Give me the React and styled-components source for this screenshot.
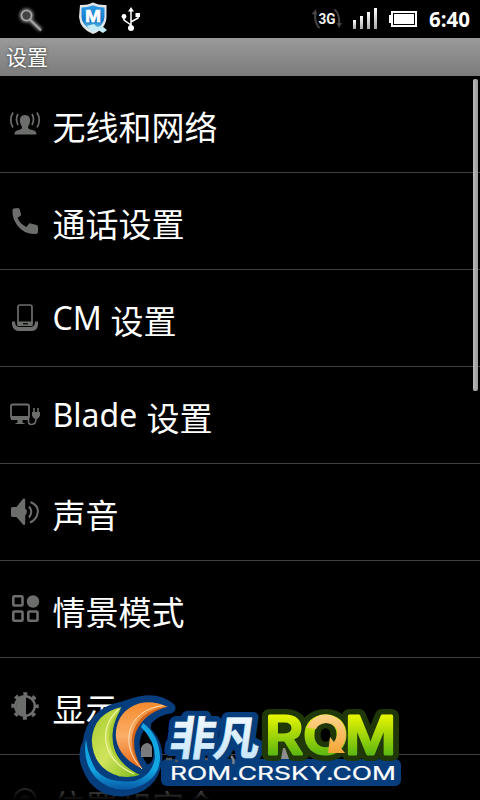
import React from 'react';
import styled, { createGlobalStyle } from 'styled-components';

const GREY = '#6c6e6c';

const NetworkIcon = () => (
  <Icon viewBox="0 0 32 32">
    <path fill={GREY} d="M16 7c4 0 5.500 3 5 6.500-.3 2.500-1.500 4-2 5.500 0 2 1.200 2 4.500 3 3.500 1 4 2.500 4 4.500h-22c0-2 .5-3.500 4-4.500 3.300-1 3.700-1.500 3.500-3-.7-1.500-1.700-3-2-5.500C10.500 10 12 7 16 7z" />
    <g fill="none" stroke={GREY} strokeWidth="1.700">
      <path d="M4 4.500q-4.500 7.500 0 15M9 6q-3 5 0 11M28 4.500q4.500 7.500 0 15M23 6q3 5 0 11" />
    </g>
  </Icon>
);

const PhoneIcon = () => (
  <Icon viewBox="0 -1 32 32">
    <path fill={GREY} d="M5 2.500l4-.5q1.500 0 1.800 1.500l1.200 5q0 1-1 1.700l-2.500 1.500q2.500 6.300 9 9.300l2-2.800q1-1.200 2.300-.8l5.700 1.600q1.500.5 1.500 2v5q0 2-3.500 2Q14.500 28 8 19 3 12 3.500 4.500q0-2 1.500-2z" />
  </Icon>
);

const DockIcon = () => (
  <Icon viewBox="0 -1 32 32">
    <rect x="9" y="2" width="14" height="20" rx="2" fill="none" stroke={GREY} strokeWidth="1.700" />
    <path fill={GREY} d="M8.500 18.500h15V23h-15zM3 18.500h3q0 5 4 5.500h12q4-.5 4-5.500h3v3q-.5 6.500-6 6.500H9.500Q4 28 3 21.500z" />
    <path d="M14 20.800h5" stroke="#000" strokeWidth="1.300" />
  </Icon>
);

const ComputerIcon = () => (
  <Icon viewBox="0 0 32 32">
    <rect x="2" y="5.500" width="18" height="14" rx="1.500" fill="none" stroke={GREY} strokeWidth="1.800" />
    <path fill={GREY} d="M2 17h18v4H2zM8.500 21h5v2.500l3 1.500H5.500l3-1.500zM23 13h8v3.500q-1.500 3.500-4 3.500t-4-3.500z" />
    <path d="M25 9v5M29 9v5M18 19q2 .5 1.500 3-.3 3.500 3 3.500 4.500 0 4.500-6" fill="none" stroke={GREY} strokeWidth="1.600" />
  </Icon>
);

const SoundIcon = () => (
  <Icon viewBox="0 -.5 32 32">
    <path fill={GREY} d="M2 11.500l1-1h4.500L14 2.300q2-1 2.200.7v9q3.500 2.500 0 7v8.500q-.4 1.800-2.200.5L7.500 20.500H3l-1-1z" />
    <path d="M20 10q4.500 5.500 0 11M21.500 5.500q9 4 7 11.500Q27.500 23 21 26" fill="none" stroke={GREY} strokeWidth="2" />
  </Icon>
);

const ProfileIcon = () => (
  <Icon viewBox="0 0 32 32">
    <g fill="none" stroke={GREY} strokeWidth="2.600">
      <rect x="4.300" y="3.300" width="9.200" height="9.200" rx="1" />
      <rect x="4.300" y="18.500" width="9.200" height="9.200" rx="1" />
      <rect x="19.300" y="18.500" width="9.200" height="9.200" rx="1" />
    </g>
    <circle cx="24" cy="8.500" r="6.200" fill={GREY} />
  </Icon>
);

const DisplayIcon = () => (
  <Icon viewBox="0 0 32 32">
    <circle cx="16" cy="16" r="9.800" fill="none" stroke={GREY} strokeWidth="2.400" />
    <circle cx="16" cy="16" r="12" fill="none" stroke={GREY} strokeWidth="3.500" strokeDasharray="4 5.425" strokeDashoffset="2" />
    <path fill={GREY} d="M17 6v20a10 10 0 0 1 0-20z" />
  </Icon>
);

const LocationIcon = () => (
  <Icon viewBox="0 0 32 32">
    <circle cx="16" cy="13" r="11" fill="none" stroke={GREY} strokeWidth="2" />
    <circle cx="16" cy="14" r="6" fill={GREY} />
  </Icon>
);

const items = [
  { name: '无线和网络', icon: NetworkIcon },
  { name: '通话设置', icon: PhoneIcon },
  { name: '设置', prefix: 'CM', prefixWidth: 48, icon: DockIcon },
  { name: '设置', prefix: 'Blade', prefixWidth: 84, icon: ComputerIcon },
  { name: '声音', icon: SoundIcon },
  { name: '情景模式', icon: ProfileIcon },
  { name: '显示', icon: DisplayIcon },
  { name: '位置和安全', icon: LocationIcon },
];

const StatusIcons = () => (
  <svg width="150" height="38" viewBox="0 0 150 38">
    <defs>
      <filter id="glow" x="-50%" y="-50%" width="200%" height="200%"><feGaussianBlur stdDeviation="1.800" /></filter>
      <linearGradient id="shield" x1="0" y1="0" x2="0" y2="1">
        <stop offset="0" stopColor="#2d9be6" />
        <stop offset=".6" stopColor="#1378c8" />
        <stop offset="1" stopColor="#8de0f4" />
      </linearGradient>
    </defs>
    <g fill="none" stroke="#888" strokeWidth="4" filter="url(#glow)">
      <circle cx="26.500" cy="15.500" r="5" /><path d="M30 20l11 10" />
    </g>
    <circle cx="26.500" cy="15.500" r="5" fill="#444" stroke="#aaa" strokeWidth="1.600" />
    <path d="M30 19.500l11 11" stroke="#a5a5a5" strokeWidth="1.800" />
    <path d="M80 5q7 .5 13-2.500Q99 5.500 106.500 5v12q-.5 12-13.500 17Q80 29 79 17z" fill="#e4e5e8" />
    <path d="M81.500 7.500q6 0 11.500-2.200 5 2.200 11.500 2.200V17q-.5 9-11.500 14-11-5-11.500-14z" fill="url(#shield)" />
    <text x="85" y="21.500" fontFamily="Liberation Sans, sans-serif" fontSize="17" fontWeight="700" fill="#fff" stroke="#fff" strokeWidth=".6" textLength="16" lengthAdjust="spacingAndGlyphs">M</text>
    <path d="M87 26l7-2 3 3 5-1 5 4-4 3-5-3-6 2z" fill="#c4ecf6" />
    <g fill="none" stroke="#fff" strokeWidth="1.500">
      <path d="M131 28V10M131 25l-7-5v-4M131 22l7-4v-4" />
    </g>
    <path fill="#fff" d="M131 7l3 4.500h-6zM135.500 13h4.500v4h-4.500z" />
    <circle cx="124" cy="16.500" r="2.400" fill="#fff" />
    <circle cx="131" cy="28" r="3" fill="#fff" />
  </svg>
);

const SystemIcons = () => (
  <svg width="110" height="38" viewBox="310 0 110 38">
    <defs>
      <linearGradient id="signal" x1="0" y1="0" x2="0" y2="1">
        <stop offset="0" stopColor="#fff" /><stop offset="1" stopColor="#aaa" />
      </linearGradient>
    </defs>
    <g fill="none" stroke="#444" strokeWidth="2">
      <path d="M319.500 28q-5-4-4.500-16M334.500 9.500q5.500 4 4.500 16" />
    </g>
    <path fill="#444" d="M311.500 14l4.500-5 1 6zM336.500 23h5.500l-3 5z" />
    <text x="318.500" y="24" fontFamily="Roboto, sans-serif" fontSize="14" fontWeight="700" fill="#f2f2f2" textLength="17" lengthAdjust="spacingAndGlyphs">3G</text>
    <g fill="url(#signal)">
      <rect x="353" y="20" width="3" height="9" />
      <rect x="360" y="16" width="3" height="13" />
      <rect x="367" y="12" width="3" height="17" />
      <rect x="374" y="8" width="3" height="21" />
    </g>
    <path fill="#fff" d="M391 11h26v16h-26v-4h-2v-8h2z" />
    <rect x="393.500" y="13.500" width="21" height="11" fill="#fff" stroke="#000" />
  </svg>
);

const Watermark = () => (
  <WatermarkSvg width="330" height="110" viewBox="75 690 330 110">
    <defs>
      <linearGradient id="lime" x1="0" y1="0" x2="1" y2="1">
        <stop offset="0" stopColor="#a5ca2b" /><stop offset=".5" stopColor="#d0e45c" /><stop offset="1" stopColor="#79b516" />
      </linearGradient>
      <linearGradient id="orange" x1="0" y1="0" x2="0" y2="1">
        <stop offset="0" stopColor="#f58a2c" /><stop offset=".5" stopColor="#fbae68" /><stop offset="1" stopColor="#e4600d" />
      </linearGradient>
      <linearGradient id="cyan" x1="0" y1="0" x2="0" y2="1">
        <stop offset="0" stopColor="#12a4e0" /><stop offset=".7" stopColor="#11a7e2" /><stop offset="1" stopColor="#0958a5" />
      </linearGradient>
      <linearGradient id="ice" x1="0" y1="0" x2="0" y2="1">
        <stop offset="0" stopColor="#fff" /><stop offset="1" stopColor="#bfe2fb" />
      </linearGradient>
      <linearGradient id="green" gradientUnits="userSpaceOnUse" x1="0" y1="715" x2="0" y2="756">
        <stop offset="0" stopColor="#e8f500" /><stop offset="1" stopColor="#58b512" />
      </linearGradient>
      <linearGradient id="gold" x1="0" y1="0" x2="0" y2="1">
        <stop offset="0" stopColor="#ffd58c" /><stop offset="1" stopColor="#f2a536" />
      </linearGradient>
    </defs>

    <path
      d="M123 707Q92 713 88 743Q82 755 88 768Q97 791 122 791Q154 788 157 758Q157 741 145 731L146 721Q155 710 170 708Q155 696 132 704z"
      fill="#063d7c" stroke="#063d7c" strokeWidth="11" strokeLinejoin="round"
    />
    <path d="M144 730q12 10 9 28-2 7-6 6-13-18-3-34z" fill="#000" />
    <path d="M141 757v-9q2-5 7-5 3 1 4 4v10z" fill="#797b7c" />
    <path d="M86 739Q82 762 96 778Q112 794 135 788Q160 780 160 757Q159 735 143 723L141 727Q155 741 155 757Q153 775 135 781Q108 784 96 770Q88 757 86 739z" fill="url(#cyan)" />
    <path d="M123 706Q93 712 91 740Q92 769 119 777Q132 779 142 775C112 762 104 735 123 706z" fill="url(#lime)" stroke="#063d7c" strokeWidth="1.500" />
    <path d="M121 709C102 728 104 760 138 774C112 762 105 735 121 709z" fill="#a9cc31" />
    <path d="M119 709C97 728 102 760 134 774" fill="none" stroke="#f0f7a8" strokeWidth="1.100" />
    <path d="M170 707Q149 697 133 705Q115 714 115 736Q117 759 145 771C130 754 124 716 170 707z" fill="url(#orange)" stroke="#063d7c" strokeWidth="1.500" />
    <path d="M166 707C130 711 122 748 144 770C130 754 126 720 166 707z" fill="#cf641f" />
    <path d="M163 705.500C126 710 119 746 142 769" fill="none" stroke="#ffe0b8" strokeWidth="1" />

    <g fontFamily="Noto Sans CJK SC, sans-serif" fontSize="45" fontWeight="900" transform="translate(168 755) skewX(-8)">
      <text stroke="#063d7c" strokeWidth="12" strokeLinejoin="round" fill="#063d7c" textLength="90">非凡</text>
    </g>
    <rect x="161" y="759" width="240" height="27" rx="6" fill="#063d7c" />
    <g fontFamily="Noto Sans CJK SC, sans-serif" fontSize="46" fontWeight="700" transform="translate(168 755) skewX(-8)">
      <text fill="url(#ice)" stroke="url(#ice)" strokeWidth=".6" textLength="90">非凡</text>
    </g>

    <g fontFamily="Inter, sans-serif" fontSize="52" fontWeight="500" strokeLinejoin="round">
      <g fill="#203807" stroke="#203807" strokeWidth="14">
        <text x="265" y="754" textLength="38" lengthAdjust="spacingAndGlyphs">R</text>
        <text x="303" y="754" textLength="45" lengthAdjust="spacingAndGlyphs">O</text>
        <text x="345" y="754" textLength="51" lengthAdjust="spacingAndGlyphs">M</text>
      </g>
      <g fill="url(#green)" stroke="url(#green)" strokeWidth="3">
        <text x="265" y="754" textLength="38" lengthAdjust="spacingAndGlyphs">R</text>
        <text x="303" y="754" textLength="45" lengthAdjust="spacingAndGlyphs">O</text>
        <text x="345" y="754" textLength="51" lengthAdjust="spacingAndGlyphs">M</text>
      </g>
    </g>
    <path d="M307 728Q312 715 326 714.500Q345 717 346 735Q346 742 341 748L345 753L328 753L330 737L334 742Q338 736 337 730Q334 723 326 723Q318 724 316 729z" fill="url(#gold)" />
    <path d="M281 759l2-11h2l4 11z" fill="#8d8d8d" />
    <path d="M231 756q4 4 2 8" fill="none" stroke="#777f88" strokeWidth="2.500" />
    <path d="M166 759h6M175 761h3M205 759h3" stroke="#4c555e" strokeWidth="2.500" />

    <text x="170" y="780" fontFamily="Inter, sans-serif" fontSize="18.500" fontWeight="400" fill="#fff" stroke="#fff" strokeWidth=".2" textLength="226" lengthAdjust="spacingAndGlyphs">ROM.CRSKY.COM</text>
  </WatermarkSvg>
);

const App = () => {
  return (
    <Screen>
      <GlobalStyle />
      <StatusBar>
        <StatusIcons />
        <SystemArea>
          <SystemIcons />
          <Clock>6:40</Clock>
        </SystemArea>
      </StatusBar>
      <TitleBar>设置</TitleBar>
      <List>
        {items.map(({ name, prefix, prefixWidth, icon: ItemIcon }) => (
          <Row key={(prefix || '') + name}>
            <ItemIcon />
            <Label>
              {prefix && <Prefix $width={prefixWidth}>{prefix}</Prefix>}
              {name}
            </Label>
          </Row>
        ))}
        <ScrollThumb />
        <BottomFade />
      </List>
      <Watermark />
    </Screen>
  );
};

export default App;

const GlobalStyle = createGlobalStyle`
  * {
    box-sizing: border-box;
  }
  body {
    margin: 0;
    background: #000;
    overflow: hidden;
  }
`;

const Screen = styled.div`
  position: relative;
  display: flex;
  flex-direction: column;
  width: 480px;
  height: 800px;
  overflow: hidden;
  background: #000;
  color: #fff;
  font-family: 'Noto Sans', 'Noto Sans CJK SC', sans-serif;
`;

const StatusBar = styled.div`
  display: flex;
  justify-content: space-between;
  height: 38px;
  flex: none;
`;

const SystemArea = styled.div`
  display: flex;
  width: 170px;
`;

const Clock = styled.div`
  flex: 1;
  padding-left: 9px;
  font-family: 'Open Sans', sans-serif;
  font-size: 20.5px;
  font-weight: 700;
  line-height: 38px;
  white-space: nowrap;
`;

const TitleBar = styled.div`
  height: 38px;
  flex: none;
  padding-left: 6px;
  background: linear-gradient(#9a9a9a, #7b7b7b);
  font-family: 'Noto Sans CJK SC', sans-serif;
  font-size: 21px;
  line-height: 37px;
  text-shadow: 0 0 3px #333;
`;

const List = styled.div`
  position: relative;
  flex: 1;
  overflow: hidden;
`;

const Row = styled.div`
  display: flex;
  align-items: center;
  height: 97px;
  padding-left: 9px;
  border-bottom: 1px solid #404040;
`;

const Icon = styled.svg`
  width: 32px;
  height: 32px;
  flex: none;
`;

const Label = styled.div`
  display: flex;
  align-items: flex-start;
  padding: 3px 0 0 11.5px;
  font-family: 'Noto Sans CJK SC', sans-serif;
  font-size: 33px;
  line-height: 48px;
  white-space: nowrap;
`;

const Prefix = styled.span`
  width: ${(props) => props.$width}px;
  margin-right: 10px;
  font-family: 'Noto Sans', sans-serif;
  font-size: 32px;
  line-height: 44px;
`;

const ScrollThumb = styled.div`
  position: absolute;
  top: 3px;
  right: 2px;
  width: 5px;
  height: 312px;
  border-radius: 2px;
  background: linear-gradient(90deg, #bbb, #999);
`;

const BottomFade = styled.div`
  position: absolute;
  left: 0;
  right: 0;
  bottom: 0;
  height: 34px;
  background: linear-gradient(transparent, #000);
`;

const WatermarkSvg = styled.svg`
  position: absolute;
  left: 75px;
  bottom: 0;
`;
